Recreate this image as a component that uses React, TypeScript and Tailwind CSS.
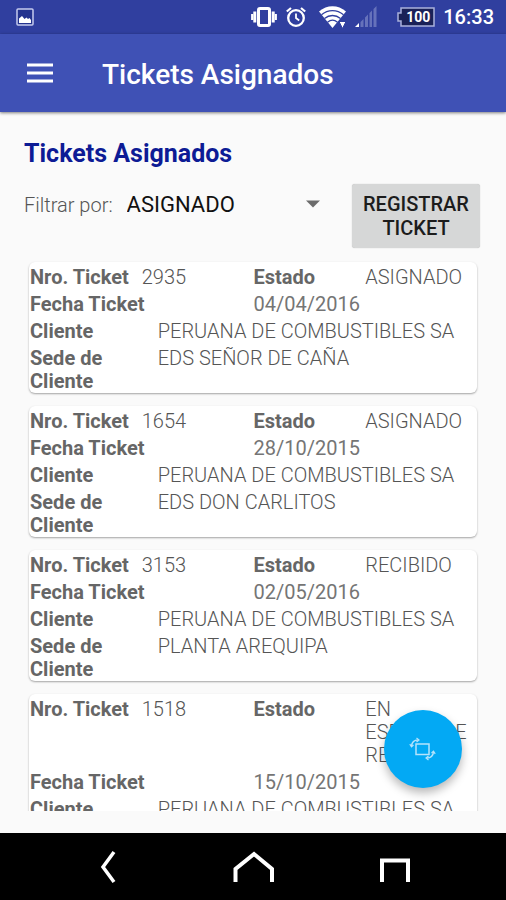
import { useState } from "react"

interface Ticket {
  numero: string
  estado: string
  fecha: string
  cliente: string
  sede: string
}

const tickets: Ticket[] = [
  {
    numero: "2935",
    estado: "ASIGNADO",
    fecha: "04/04/2016",
    cliente: "PERUANA DE COMBUSTIBLES SA",
    sede: "EDS SEÑOR DE CAÑA",
  },
  {
    numero: "1654",
    estado: "ASIGNADO",
    fecha: "28/10/2015",
    cliente: "PERUANA DE COMBUSTIBLES SA",
    sede: "EDS DON CARLITOS",
  },
  {
    numero: "3153",
    estado: "RECIBIDO",
    fecha: "02/05/2016",
    cliente: "PERUANA DE COMBUSTIBLES SA",
    sede: "PLANTA AREQUIPA",
  },
  {
    numero: "1518",
    estado: "EN ESPERA\u00a0DE REVISIÓN",
    fecha: "15/10/2015",
    cliente: "PERUANA DE COMBUSTIBLES SA",
    sede: "PLANTA AREQUIPA",
  },
]

function StatusBar() {
  return (
    <div className="flex h-[34px] shrink-0 items-center bg-[#303f9f] px-3 text-white">
      <svg className="ml-1 h-[18px] w-[18px]" viewBox="0 0 18 18" aria-hidden="true">
        <rect x="1" y="1" width="16" height="16" rx="1" fill="#24338f" stroke="#c5cbee" strokeWidth="1.500" />
        <path d="M3 15V10.500l3-2.500 2.500 3 2-1.500 1.500 1.500 1.500-1 1.500 2V15z" fill="#fff" />
      </svg>
      <div className="ml-auto flex items-center">
        {/* vibrate */}
        <svg className="h-[22px] w-[26px]" viewBox="0 0 26 22" aria-hidden="true">
          <rect x="7.500" y="2.500" width="11" height="17" rx="1.500" fill="none" stroke="#fff" strokeWidth="3" />
          <path d="M3.800 5.500v11M22.200 5.500v11" stroke="#fff" strokeWidth="3" />
          <path d="M1.200 8v6M24.800 8v6" stroke="#fff" strokeWidth="2.200" />
        </svg>
        {/* alarm */}
        <svg className="ml-2 h-[22px] w-[22px]" viewBox="0 0 22 22" fill="none" stroke="#fff" aria-hidden="true">
          <circle cx="11" cy="12" r="7.800" strokeWidth="2.300" />
          <path d="M1.800 5.500L6 2M20.200 5.500L16 2" strokeWidth="2.200" />
          <path d="M11 7.500V12l3.200 2.500" strokeWidth="1.800" />
        </svg>
        {/* wifi */}
        <svg className="ml-3 h-[24px] w-[28px]" viewBox="0 0 28 24" aria-hidden="true">
          <path d="M0 6.500C8-.5 19-.5 27 6.500L13.500 23z" fill="#fff" />
          <path
            d="M2.500 9.800c6.500-5.600 15.500-5.600 22 0M5.500 13.500c4.800-4 11.200-4 16 0M8.500 17.200c3-2.400 7-2.400 10 0"
            fill="none"
            stroke="#303f9f"
            strokeWidth="1.300"
          />
          <path d="M20 16.500h7l-3.500 7z" fill="#fff" stroke="#303f9f" strokeWidth="1" />
        </svg>
        {/* mobile signal */}
        <svg className="ml-2 h-[22px] w-[22px]" viewBox="0 0 22 22" aria-hidden="true">
          <path d="M5.500 21V16l3-3v8zM10 21v-9.500l3-3V21zM14.500 21V7l2.500-2.500V21zM18.500 21V3L21.500 0v21z" fill="#6672bb" />
          <path d="M0 21l4-4v4z" fill="#fff" />
        </svg>
        <span className="relative ml-5 flex h-5 w-[38px] items-center justify-center">
          <svg className="absolute inset-0 h-full w-full" viewBox="0 0 38 20" aria-hidden="true">
            <path d="M4 1H37V19H4V14H1V6H4z" fill="#1a2157" stroke="#a9b1dc" strokeWidth="1.500" />
          </svg>
          <span className="relative ml-1 text-sm font-bold">100</span>
        </span>
        <span className="ml-2 text-xl font-medium">16:33</span>
      </div>
    </div>
  )
}

function TicketCard({ ticket }: { ticket: Ticket }) {
  return (
    <li className="rounded-md bg-white pt-1 pl-px shadow-[0_1px_2px_rgba(0,0,0,0.35)]">
      <dl className="flex flex-col gap-1 text-xl leading-[23px] text-[#666666]">
        <div className="grid grid-cols-4">
          <dt className="font-bold whitespace-nowrap">Nro. Ticket</dt>
          <dd className="font-light text-[#555555]">{ticket.numero}</dd>
          <dt className="font-bold">Estado</dt>
          <dd className="font-light text-[#555555]">{ticket.estado}</dd>
        </div>
        <div className="grid grid-cols-2">
          <dt className="font-bold">Fecha Ticket</dt>
          <dd className="text-[#757575]">{ticket.fecha}</dd>
        </div>
        <div className="grid grid-cols-[2fr_5fr]">
          <dt className="font-bold">Cliente</dt>
          <dd className="font-light text-[#555555]">{ticket.cliente}</dd>
        </div>
        <div className="grid grid-cols-[2fr_5fr]">
          <dt className="pr-8 font-bold">Sede de Cliente</dt>
          <dd className="font-light text-[#555555]">{ticket.sede}</dd>
        </div>
      </dl>
    </li>
  )
}

export default function App() {
  const [estado, setEstado] = useState("ASIGNADO")

  return (
    <div className="flex h-screen flex-col bg-[#fafafa] font-['Roboto',sans-serif]">
      <StatusBar />
      <header className="z-10 flex h-[78px] shrink-0 items-center bg-[#3f51b5] px-6 text-white shadow-[0_1px_3px_rgba(0,0,0,0.5)]">
        <button type="button" aria-label="Menú" className="flex h-8 w-8 items-center justify-center">
          <svg className="h-[22px] w-[26px]" viewBox="0 0 26 22" aria-hidden="true">
            <path d="M0 3h26M0 11h26M0 19h26" stroke="#fff" strokeWidth="3" />
          </svg>
        </button>
        <h1 className="ml-[46px] pt-1 text-[28px] font-medium">Tickets Asignados</h1>
      </header>

      <main className="relative flex min-h-0 flex-1 flex-col px-6 pt-6 pb-[22px]">
        <h2 className="text-[25px] leading-9 font-bold text-[#0d1b95]">Tickets Asignados</h2>
        <div className="mt-3 flex items-start pr-[2px]">
          <label htmlFor="filtro" className="text-xl leading-[42px] font-light whitespace-nowrap text-[#555555]">
            Filtrar por:
          </label>
          <div className="relative ml-[14px] flex-1">
            <select
              id="filtro"
              value={estado}
              onChange={(e) => setEstado(e.target.value)}
              className="h-10 w-full appearance-none bg-transparent text-[22px] text-[#111111] outline-none"
            >
              <option value="ASIGNADO">ASIGNADO</option>
              <option value="RECIBIDO">RECIBIDO</option>
              <option value="EN ESPERA DE REVISIÓN">EN ESPERA DE REVISIÓN</option>
            </select>
            <svg
              className="pointer-events-none absolute top-4 right-8 h-2 w-[14px]"
              viewBox="0 0 14 8"
              aria-hidden="true"
            >
              <path d="M0 0.500h14L7 7.500z" fill="#6b6b6b" />
            </svg>
          </div>
          <button
            type="button"
            className="h-16 w-32 rounded-[3px] bg-[#d6d7d7] text-xl leading-6 font-medium text-[#1c1c1c] shadow-[0_0_1px_rgba(0,0,0,0.3)]"
          >
            REGISTRAR TICKET
          </button>
        </div>

        <ul className="mt-2 flex min-h-0 flex-1 flex-col gap-[13px] overflow-y-auto px-[5px] pt-[6px] [scrollbar-width:none]">
          {tickets.map((ticket) => (
            <TicketCard key={ticket.numero} ticket={ticket} />
          ))}
        </ul>

        <button
          type="button"
          aria-label="Actualizar"
          className="absolute right-11 bottom-[45px] flex h-[78px] w-[78px] items-center justify-center rounded-full bg-[#03a9f4] shadow-[0_5px_10px_rgba(0,0,0,0.28)]"
        >
          <svg className="h-6 w-7" viewBox="0 0 28 24" fill="none" stroke="#b5e3fb" aria-hidden="true">
            <rect x="7" y="7" width="13" height="10.500" strokeWidth="1.500" />
            <path d="M2.500 9C3 5 5.500 3 9 3" strokeWidth="1.500" />
            <path d="M7.500 1l2.500 2-2.500 2M.8 7.200L2.500 9.800l2-1.800" strokeWidth="1.200" />
            <path d="M24.500 15c-.5 4-3 6-6.500 6" strokeWidth="1.500" />
            <path d="M19.500 23L17 21l2.500-2M26.200 16.800l-1.700-2.600-2 1.800" strokeWidth="1.200" />
          </svg>
        </button>
      </main>

      <nav className="grid h-[67px] shrink-0 grid-cols-3 items-center bg-black px-9">
        <button type="button" aria-label="Atrás" className="flex justify-center">
          <svg className="h-9 w-12" viewBox="0 0 48 36" fill="none" stroke="#fff" strokeWidth="3.500" aria-hidden="true">
            <path d="M30 3L19 18l11 15" />
          </svg>
        </button>
        <button type="button" aria-label="Inicio" className="flex justify-center">
          <svg className="h-9 w-12" viewBox="0 0 48 36" fill="none" stroke="#fff" strokeWidth="4" aria-hidden="true">
            <path d="M6.500 33V20L25 5l18 15V33" />
          </svg>
        </button>
        <button type="button" aria-label="Recientes" className="flex justify-center">
          <svg className="h-9 w-12" viewBox="0 0 48 36" fill="none" stroke="#fff" strokeWidth="4" aria-hidden="true">
            <path d="M8 33V11.500H34V33" />
          </svg>
        </button>
      </nav>
    </div>
  )
}
